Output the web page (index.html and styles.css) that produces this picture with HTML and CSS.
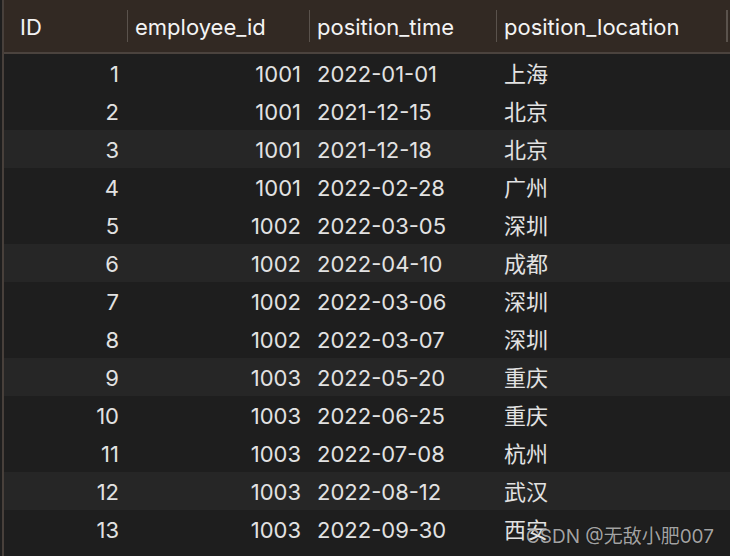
FILE: index.html
```html
<!DOCTYPE html>
<html>
<head>
<meta charset="utf-8">
<link rel="stylesheet" href="styles.css">
</head>
<body>
<div class="grid">
  <div class="row head">
    <div class="c c1">ID</div>
    <div class="c c2 sep">employee_id</div>
    <div class="c c3 sep">position_time</div>
    <div class="c c4 sep">position_location</div>
  </div>
  <div class="row"><div class="c c1 r">1</div><div class="c c2 r">1001</div><div class="c c3">2022-01-01</div><div class="c c4">上海</div></div>
  <div class="row"><div class="c c1 r">2</div><div class="c c2 r">1001</div><div class="c c3">2021-12-15</div><div class="c c4">北京</div></div>
  <div class="row alt"><div class="c c1 r">3</div><div class="c c2 r">1001</div><div class="c c3">2021-12-18</div><div class="c c4">北京</div></div>
  <div class="row"><div class="c c1 r">4</div><div class="c c2 r">1001</div><div class="c c3">2022-02-28</div><div class="c c4">广州</div></div>
  <div class="row"><div class="c c1 r">5</div><div class="c c2 r">1002</div><div class="c c3">2022-03-05</div><div class="c c4">深圳</div></div>
  <div class="row alt"><div class="c c1 r">6</div><div class="c c2 r">1002</div><div class="c c3">2022-04-10</div><div class="c c4">成都</div></div>
  <div class="row"><div class="c c1 r">7</div><div class="c c2 r">1002</div><div class="c c3">2022-03-06</div><div class="c c4">深圳</div></div>
  <div class="row"><div class="c c1 r">8</div><div class="c c2 r">1002</div><div class="c c3">2022-03-07</div><div class="c c4">深圳</div></div>
  <div class="row alt"><div class="c c1 r">9</div><div class="c c2 r">1003</div><div class="c c3">2022-05-20</div><div class="c c4">重庆</div></div>
  <div class="row"><div class="c c1 r">10</div><div class="c c2 r">1003</div><div class="c c3">2022-06-25</div><div class="c c4">重庆</div></div>
  <div class="row"><div class="c c1 r">11</div><div class="c c2 r">1003</div><div class="c c3">2022-07-08</div><div class="c c4">杭州</div></div>
  <div class="row alt"><div class="c c1 r">12</div><div class="c c2 r">1003</div><div class="c c3">2022-08-12</div><div class="c c4">武汉</div></div>
  <div class="row"><div class="c c1 r">13</div><div class="c c2 r">1003</div><div class="c c3">2022-09-30</div><div class="c c4">西安</div></div>
</div>
<div class="wm">CSDN @无敌小肥007</div>
</body>
</html>
```
FILE: styles.css
```css
html, body {
  margin: 0;
  padding: 0;
  width: 730px;
  height: 556px;
  overflow: hidden;
  background: #1e1e1e;
}
body {
  position: relative;
  font-family: Inter, "Noto Sans CJK SC", sans-serif;
  font-size: 22px;
  color: #e2e2e2;
}
.grid {
  margin-left: 2px;
  border-left: 2px solid #48403b;
  height: 556px;
}
.row {
  display: flex;
  height: 38px;
}
.row.alt {
  background: #262626;
}
.row.head {
  height: 52px;
  background: #322923;
  border-bottom: 2px solid #4b433e;
  color: #f4f4f4;
}
.c {
  box-sizing: border-box;
  padding: 2px 8px 0;
  line-height: 36px;
  white-space: nowrap;
}
.head .c {
  padding-top: 2px;
  line-height: 50px;
}
.c1 { width: 123px; }
.c2 { width: 182px; }
.c3 { width: 187px; }
.c4 { width: 231px; }
.head .c1 { padding-left: 16px; }
.head .c4 { width: 232px; }
.r { text-align: right; }
.sep {
  background: linear-gradient(#5a524c, #5a524c) no-repeat left center / 1px 32px;
}
.head .c4.sep {
  background:
    linear-gradient(#5a524c, #5a524c) no-repeat left center / 1px 32px,
    linear-gradient(#5a524c, #5a524c) no-repeat right center / 2px 32px;
}
.wm {
  position: absolute;
  right: 16px;
  bottom: 8px;
  font-size: 19px;
  color: rgba(205, 205, 205, 0.78);
  text-shadow: 0 0 1px rgba(0,0,0,0.6);
}
```
